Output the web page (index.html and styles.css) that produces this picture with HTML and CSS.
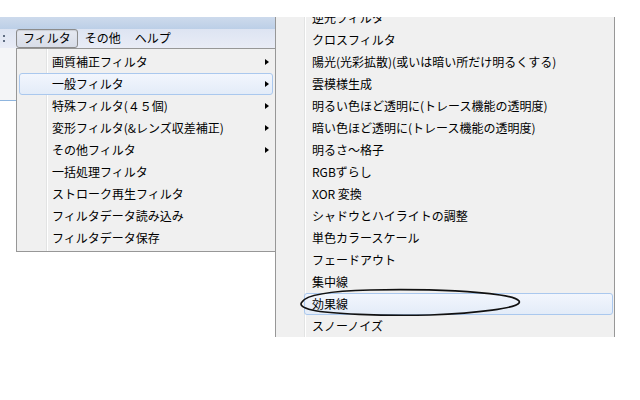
FILE: index.html
```html
<!DOCTYPE html>
<html lang="ja">
<head>
    <meta charset="UTF-8">
    <title>フィルタメニュー</title>
    <link rel="stylesheet" href="styles.css">
</head>
<body>
    <div class="top-gap"></div>

    <div class="menubar">
        <div class="grip"><span></span></div>
        <div class="menubar-item open">フィルタ</div>
        <div class="menubar-item">その他</div>
        <div class="menubar-item">ヘルプ</div>
    </div>
    <div class="side-strip"></div>

    <!-- フィルタ dropdown -->
    <div class="menu menu-main">
        <div class="menu-item"><span>画質補正フィルタ</span><span class="arrow"></span></div>
        <div class="menu-item hover"><span>一般フィルタ</span><span class="arrow"></span></div>
        <div class="menu-item"><span>特殊フィルタ(４５個)</span><span class="arrow"></span></div>
        <div class="menu-item"><span>変形フィルタ(&amp;レンズ収差補正)</span><span class="arrow"></span></div>
        <div class="menu-item"><span>その他フィルタ</span><span class="arrow"></span></div>
        <div class="menu-item"><span>一括処理フィルタ</span></div>
        <div class="menu-item"><span>ストローク再生フィルタ</span></div>
        <div class="menu-item"><span>フィルタデータ読み込み</span></div>
        <div class="menu-item"><span>フィルタデータ保存</span></div>
    </div>

    <!-- 一般フィルタ submenu -->
    <div class="menu menu-sub">
        <div class="menu-list">
            <div class="menu-item">逆光フィルタ</div>
            <div class="menu-item">クロスフィルタ</div>
            <div class="menu-item">陽光(光彩拡散)(或いは暗い所だけ明るくする)</div>
            <div class="menu-item">雲模様生成</div>
            <div class="menu-item">明るい色ほど透明に(トレース機能の透明度)</div>
            <div class="menu-item">暗い色ほど透明に(トレース機能の透明度)</div>
            <div class="menu-item">明るさ～格子</div>
            <div class="menu-item">RGBずらし</div>
            <div class="menu-item">XOR 変換</div>
            <div class="menu-item">シャドウとハイライトの調整</div>
            <div class="menu-item">単色カラースケール</div>
            <div class="menu-item">フェードアウト</div>
            <div class="menu-item">集中線</div>
            <div class="menu-item hover">効果線</div>
            <div class="menu-item">スノーノイズ</div>
        </div>
    </div>

    <!-- hand drawn circle around 効果線 -->
    <svg class="annotation" viewBox="0 0 640 400">
        <path d="M302,302 C306,295 330,291 370,290 C420,289 470,291 500,295 C514,297 521,300 519,303 C516,308 480,313 430,315 C380,316 330,314 312,310 C303,308 299,305 302,302 Z"/>
    </svg>
</body>
</html>
```

FILE: styles.css
```css
* {
    box-sizing: border-box;
    margin: 0;
    padding: 0;
}

body {
    width: 640px;
    height: 400px;
    overflow: hidden;
    position: relative;
    background-color: #fff;
    color: #000;
    font-family: "Noto Sans CJK JP", "Noto Sans", sans-serif;
    font-size: 12px;
}

.top-gap {
    height: 17px;
}

.menubar {
    display: flex;
    align-items: flex-end;
    width: 275px;
    height: 31px;
    background: linear-gradient(to bottom, #cddaec 0, #bccfe7 12px, #dde4f2 12px, #e9ecf6 31px);
}

.grip {
    display: flex;
    align-items: center;
    width: 16px;
    height: 19px;
    padding-left: 3px;
}

.grip span {
    display: block;
    height: 7px;
    border-left: 2px dotted #5f6d82;
}

.menubar-item {
    height: 19px;
    line-height: 16px;
    padding: 0 6px;
    border: 1px solid transparent;
    border-radius: 3px;
    white-space: nowrap;
}

.menubar-item.open {
    border-color: #8c8c8c;
    background: linear-gradient(#e6e9f1, #d8dde8);
    box-shadow: inset 0 1px 1px rgba(0, 0, 0, 0.12);
}

.side-strip {
    width: 16px;
    height: 53px;
    background-color: #f4f5f7;
    border-bottom: 1px solid #8fb5de;
}

.menu {
    position: absolute;
    border: 1px solid #979797;
    background-color: #f0f0f0;
}

.menu-main {
    left: 16px;
    top: 48px;
    width: 260px;
    padding: 2px;
    background: linear-gradient(to right, #f0f0f0 29px, #e2e3e3 29px 30px, #fff 30px 31px, #f0f0f0 31px);
}

.menu-item {
    display: flex;
    justify-content: space-between;
    align-items: center;
    height: 22px;
    padding: 0 3px 1px 32px;
    border: 1px solid transparent;
    border-radius: 3px;
    white-space: nowrap;
}

.menu-item.hover {
    border-color: #aac8ee;
    background: linear-gradient(#f2f6fd, #e3ecf8);
}

.arrow {
    width: 0;
    height: 0;
    border-left: 4px solid #000;
    border-top: 3.5px solid transparent;
    border-bottom: 3.5px solid transparent;
}

.menu-sub {
    left: 275px;
    top: 17px;
    width: 340px;
    height: 320px;
    overflow: hidden;
    border-top: 0;
    border-bottom: 0;
    background: linear-gradient(to right, #f0f0f0 28px, #e2e3e3 28px 29px, #fff 29px 30px, #f0f0f0 30px);
}

.menu-list {
    margin-top: -10px;
}

.menu-sub .menu-item {
    margin: 0 1px 0 28px;
    padding: 0 0 1px 7px;
}

.annotation {
    position: absolute;
    left: 0;
    top: 0;
    width: 640px;
    height: 400px;
    pointer-events: none;
}

.annotation path {
    fill: none;
    stroke: #111;
    stroke-width: 1.7;
}
```
